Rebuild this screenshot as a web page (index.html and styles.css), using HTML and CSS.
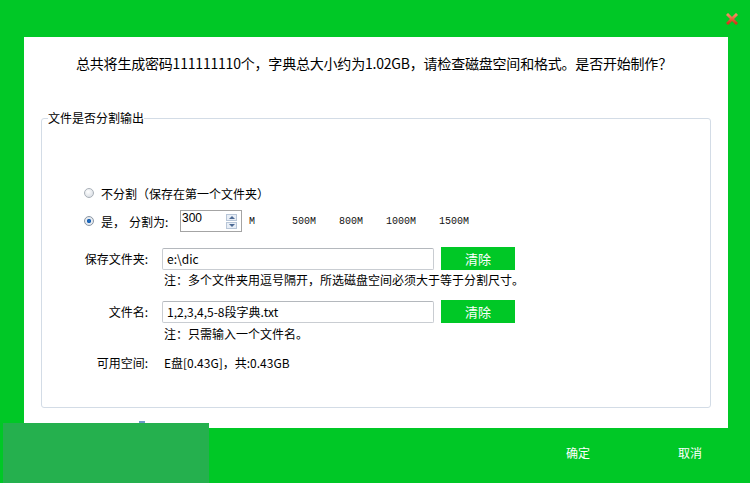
FILE: index.html
```html
<!DOCTYPE html>
<html lang="zh-CN">
<head>
<meta charset="utf-8">
<title>确认</title>
<link rel="stylesheet" href="styles.css">
</head>
<body>
<div class="window">
  <div class="titlebar">
    <svg class="close" width="12" height="12" viewBox="0 0 12 12">
      <defs>
        <linearGradient id="xg" x1="0" y1="0" x2="0" y2="1">
          <stop offset="0" stop-color="#f48a5e"/>
          <stop offset="1" stop-color="#d2381c"/>
        </linearGradient>
      </defs>
      <path d="M2 2 L10 10 M10 2 L2 10" stroke="url(#xg)" stroke-width="3" stroke-linecap="square"/>
    </svg>
  </div>
  <div class="panel">
    <p class="message">总共将生成密码111111110个，字典总大小约为1.02GB，请检查磁盘空间和格式。是否开始制作？</p>
    <fieldset class="group">
      <legend class="group-title">文件是否分割输出</legend>
      <div class="options">
        <label class="option">
          <span class="radio"></span>
          <span>不分割（保存在第一个文件夹）</span>
        </label>
        <div class="option option-split">
          <span class="radio checked"></span>
          <span class="yes">是，</span>
          <span class="split-label">分割为:</span>
          <span class="spinner">
            <span class="spin-value">300</span>
            <span class="spin-buttons">
              <span class="spin-btn up"></span>
              <span class="spin-btn down"></span>
            </span>
          </span>
          <span class="sizes">
            <span class="size s-m">M</span>
            <span class="size s-500">500M</span>
            <span class="size s-800">800M</span>
            <span class="size s-1000">1000M</span>
            <span class="size">1500M</span>
          </span>
        </div>
      </div>
      <div class="form">
        <div class="row row-folder">
          <span class="label">保存文件夹:</span>
          <span class="field">e:\dic</span>
          <span class="btn">清除</span>
        </div>
        <div class="note note-folder">注：多个文件夹用逗号隔开，所选磁盘空间必须大于等于分割尺寸。</div>
        <div class="row row-name">
          <span class="label">文件名:</span>
          <span class="field">1,2,3,4,5-8段字典.txt</span>
          <span class="btn">清除</span>
        </div>
        <div class="note note-name">注：只需输入一个文件名。</div>
        <div class="row row-space">
          <span class="label">可用空间:</span>
          <span class="value">E盘[0.43G]，共:0.43GB</span>
        </div>
      </div>
    </fieldset>
  </div>
  <div class="footer">
    <span class="action">确定</span>
    <span class="action">取消</span>
  </div>
  <div class="taskbar-patch"></div>
  <div class="taskbar-mark"></div>
</div>
</body>
</html>
```
FILE: styles.css
```css
html, body {
  margin: 0;
  padding: 0;
}
body {
  width: 750px;
  height: 483px;
  overflow: hidden;
  font-family: "Noto Sans CJK SC", "Liberation Sans", sans-serif;
  font-size: 12px;
  color: #000;
}
.window {
  position: relative;
  width: 750px;
  height: 483px;
  background: #00c826;
}
.titlebar {
  height: 37px;
  box-sizing: border-box;
  display: flex;
  justify-content: flex-end;
  padding: 13px 12px 0 0;
}
.close {
  display: block;
}
.panel {
  margin-left: 24px;
  width: 704px;
  height: 391px;
  background: #fff;
  box-sizing: border-box;
  padding-top: 17px;
  overflow: hidden;
}
.message {
  margin: 0;
  padding-right: 4px;
  text-align: center;
  font-size: 14px;
  line-height: 18px;
  letter-spacing: -0.2px;
}
.group {
  margin: 39px 17px 0;
  padding: 0 0 0 6px;
  height: 297px;
  box-sizing: border-box;
  border: 1px solid #d3dce6;
  border-radius: 3px;
}
.group-title {
  padding: 0;
  font-size: 12px;
  line-height: 14px;
}
.options {
  margin-top: 60px;
  padding-left: 36px;
}
.option {
  display: flex;
  align-items: center;
}
.option:first-child {
  height: 16px;
}
.option-split {
  margin-top: 9px;
  height: 22px;
}
.radio {
  width: 10px;
  height: 10px;
  box-sizing: border-box;
  border-radius: 50%;
  border: 1px solid #a9b0b8;
  background: radial-gradient(circle at 40% 35%, #ffffff 0, #dfe3e8 70%);
  margin-right: 7px;
}
.radio.checked {
  background: radial-gradient(circle at 50% 50%, #1f6fc4 0, #1a5fb0 35%, #e9edf2 40%, #dfe3e8 100%);
  border-color: #8a96a4;
}
.yes {
  width: 28px;
}
.split-label {
  width: 51px;
}
.spinner {
  width: 62px;
  height: 22px;
  box-sizing: border-box;
  border: 1px solid #a4a4a4;
  display: flex;
  justify-content: space-between;
  align-items: flex-start;
  font-family: "Liberation Sans", sans-serif;
  font-size: 12px;
  line-height: 12px;
}
.spin-value {
  padding: 1px 0 0 1px;
}
.spin-buttons {
  margin: 3px 4px 0 0;
  display: flex;
  flex-direction: column;
  gap: 1px;
}
.spin-btn {
  width: 11px;
  height: 7px;
  box-sizing: border-box;
  border: 1px solid #b8c6d8;
  background: #e8eef6;
  display: flex;
  justify-content: center;
  align-items: center;
}
.spin-btn.up::after,
.spin-btn.down::after {
  content: "";
  width: 0;
  height: 0;
  border-left: 3px solid transparent;
  border-right: 3px solid transparent;
}
.spin-btn.up::after {
  border-bottom: 3px solid #4d6a94;
}
.spin-btn.down::after {
  border-top: 3px solid #4d6a94;
}
.sizes {
  margin-left: 7px;
  display: flex;
  font-family: "Liberation Mono", monospace;
  font-size: 10px;
  color: #111;
}
.size.s-m {
  width: 43px;
}
.size.s-500,
.size.s-800 {
  width: 47px;
}
.size.s-1000 {
  width: 53px;
}
.form {
  margin-top: 15px;
}
.row {
  display: flex;
  align-items: center;
  height: 23px;
}
.label {
  width: 100px;
  text-align: right;
  margin-right: 14px;
}
.field {
  width: 272px;
  height: 22px;
  box-sizing: border-box;
  border: 1px solid #c9cdd2;
  border-top-color: #b4b8bd;
  border-radius: 2px;
  padding-left: 4px;
  display: flex;
  align-items: center;
  font-size: 12px;
}
.btn {
  margin-left: 7px;
  width: 74px;
  height: 23px;
  background: #00c826;
  color: #fff;
  font-size: 13px;
  display: flex;
  align-items: center;
  justify-content: center;
}
.note {
  margin-left: 116px;
  line-height: 16px;
}
.note-folder {
  margin-top: 2px;
}
.row-name {
  margin-top: 12px;
}
.note-name {
  margin-top: 3px;
}
.row-space {
  margin-top: 12px;
  height: 16px;
}
.value {
  padding-left: 2px;
}
.footer {
  height: 55px;
  box-sizing: border-box;
  padding: 17px 30px 0 0;
  display: flex;
  justify-content: flex-end;
  gap: 52px;
}
.action {
  width: 60px;
  text-align: center;
  color: #fff;
  line-height: 16px;
}
.taskbar-patch {
  position: absolute;
  left: 3px;
  top: 423px;
  width: 206px;
  height: 60px;
  background: #25b04e;
}
.taskbar-mark {
  position: absolute;
  left: 139px;
  top: 421px;
  width: 6px;
  height: 2px;
  background: #6e9ac8;
}
```
